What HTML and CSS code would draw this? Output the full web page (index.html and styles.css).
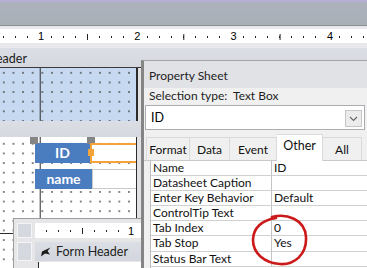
FILE: index.html
```html
<!DOCTYPE html>
<html lang="en">
<head>
  <meta charset="UTF-8">
  <title>Form Design - Property Sheet</title>
  <link rel="stylesheet" href="styles.css">
</head>
<body>
  <div class="app">
    <div class="titlebar"></div>
    <div class="ruler-wrap">
      <div class="ruler">
        <span class="mark"><b>1</b></span>
        <span class="mark"><b>2</b></span>
        <span class="mark"><b>3</b></span>
        <span class="mark"><b>4</b></span>
      </div>
    </div>

    <!-- Form design surface -->
    <div class="designer">
      <div class="section-bar header-bar"><span class="section-title">Form Header</span></div>
      <div class="form-row">
        <div class="grid-area blue-area"></div>
        <div class="gutter"></div>
      </div>
      <div class="section-bar detail-bar"></div>
      <div class="form-row detail-row">
        <div class="grid-area white-area">
          <div class="control-row first">
            <span class="handle h1"></span>
            <span class="handle h2"></span>
            <div class="label">ID</div>
            <div class="textbox selected"><span class="sel-dot"></span></div>
          </div>
          <div class="control-row">
            <div class="label wide">name</div>
            <div class="textbox"></div>
          </div>
        </div>
        <div class="gutter"></div>
      </div>
    </div>

    <!-- Second form window -->
    <div class="subform">
      <div class="sub-row">
        <span class="sub-btn"></span>
        <div class="sub-ruler"><span class="mark"><b>1</b></span></div>
      </div>
      <div class="sub-row">
        <span class="sub-btn tall"></span>
        <div class="sub-section">
          <svg class="sec-icon" width="10" height="10" viewBox="0 0 10 10"><path d="M9.5 0.5 L1 4.5 L0 9.5 L4 6.5 L9 7.5 L6.5 4 Z" fill="#1a1a1a"/></svg>
          <span>Form Header</span>
        </div>
      </div>
      <div class="sub-row">
        <span class="sub-spacer"></span>
        <div class="sub-body"></div>
      </div>
    </div>

    <!-- Property sheet -->
    <div class="property-sheet">
      <div class="ps-title">Property Sheet</div>
      <div class="ps-selection">Selection type:&nbsp; Text Box</div>
      <div class="ps-combo">
        <span>ID</span>
        <span class="combo-btn">
          <svg width="9" height="6" viewBox="0 0 9 6"><polyline points="1,1 4.5,4.5 8,1" fill="none" stroke="#666" stroke-width="1.1"/></svg>
        </span>
      </div>
      <div class="ps-tabs">
        <span class="tab t-format">Format</span>
        <span class="tab t-data">Data</span>
        <span class="tab t-event">Event</span>
        <span class="tab t-other active">Other</span>
        <span class="tab t-all">All</span>
      </div>
      <div class="ps-grid">
        <div class="cell">Name</div><div class="cell val">ID</div>
        <div class="cell">Datasheet Caption</div><div class="cell val"></div>
        <div class="cell">Enter Key Behavior</div><div class="cell val">Default</div>
        <div class="cell">ControlTip Text</div><div class="cell val"></div>
        <div class="cell">Tab Index</div><div class="cell val">0</div>
        <div class="cell">Tab Stop</div><div class="cell val">Yes</div>
        <div class="cell">Status Bar Text</div><div class="cell val"></div>
      </div>
    </div>

    <!-- hand drawn annotation -->
    <svg class="annotation" width="62" height="56" viewBox="0 0 62 56">
      <path d="M22 4 C36 0 55 6 56 24 C57 42 44 52 30 51 C14 50 3 40 3 27 C3 15 12 7 26 5" fill="none" stroke="#cc1a1a" stroke-width="2.6" stroke-linecap="round"/>
    </svg>
  </div>
</body>
</html>
```

FILE: styles.css
```css
/* Base */
body {
  margin: 0;
  font-family: Lato, "Liberation Sans", sans-serif;
  color: #000;
}

.app {
  position: relative;
  width: 367px;
  height: 268px;
  overflow: hidden;
  background: #e8e8e8;
}

/* Top strip and ruler */
.titlebar {
  height: 26px;
  border-top: 2px solid #b6aed4;
  box-sizing: border-box;
  background: linear-gradient(#aeb1bd, #a8b1b6);
  border-bottom: 1px solid #868c92;
}

.ruler-wrap {
  padding: 3px 0 5px;
  background: #e9e9ed;
}

.ruler {
  height: 14px;
  display: flex;
  padding-left: 37px;
  background-color: #fff;
  background-image:
    linear-gradient(to right, #222 1px, transparent 1px),
    linear-gradient(to right, #222 1px, transparent 1px);
  background-size: 12px 2px, 96.3px 6px;
  background-position: 3px 7px, 87px 5px;
  background-repeat: repeat-x;
  font-family: "Liberation Sans", sans-serif;
  font-size: 11px;
  line-height: 15px;
}

.mark {
  width: 96.3px;
  flex: none;
}

.mark b {
  font-weight: normal;
  background: #fff;
  padding: 0 1px;
}

/* Design surface */
.section-bar {
  background: linear-gradient(#dcdee5, #d5d8df);
  overflow: hidden;
  white-space: nowrap;
}

.header-bar {
  height: 19px;
  line-height: 22px;
  font-size: 12.5px;
  color: #222;
  border-bottom: 1px solid #3a3a3a;
}

.section-title {
  display: inline-block;
  margin-left: -45px;
}

.detail-bar {
  height: 16px;
}

.form-row {
  display: flex;
}

.grid-area {
  width: 137px;
  flex: none;
  background-image:
    linear-gradient(to right, transparent 40px, #2b2b2b 40px, #2b2b2b 41px, transparent 41px),
    radial-gradient(circle, #3a3a3a 0.55px, transparent 0.9px);
  background-size: 96.3px 100%, 9.63px 9.63px;
  background-position: 0 0, -1px 0;
  border-right: 1px solid #2b2b2b;
}

.blue-area {
  height: 53px;
  background-color: #c7d9f0;
}

.white-area {
  height: 131px;
  background-color: #fff;
  background-image:
    linear-gradient(to right, transparent 40px, #2b2b2b 40px, #2b2b2b 41px, transparent 41px),
    linear-gradient(to bottom, transparent 96px, #2b2b2b 96px, #2b2b2b 97px, transparent 97px),
    radial-gradient(circle, #3a3a3a 0.55px, transparent 0.9px);
  background-size: 96.3px 100%, 100% 200px, 9.63px 9.63px;
  background-position: 0 0, 0 0, -1px 2px;
  padding-top: 6px;
  box-sizing: border-box;
}

.gutter {
  flex: 1;
  background: #e2e2e4;
}

/* Controls */
.control-row {
  position: relative;
  display: flex;
  height: 20px;
  padding-left: 35px;
  margin-bottom: 6px;
}

.label {
  width: 55px;
  background: #4a7dc0;
  color: #fff;
  font-weight: bold;
  font-size: 14px;
  line-height: 20px;
  text-align: center;
}

.label.wide {
  width: 57px;
}

.textbox {
  flex: 1;
  background: #fff;
  border: 1px solid #c9c9c9;
  border-right: none;
  box-sizing: border-box;
}

.textbox.selected {
  position: relative;
  border: 2px solid #f2a33a;
  border-right: none;
}

.sel-dot {
  position: absolute;
  left: -4px;
  top: 4px;
  width: 6px;
  height: 7px;
  background: #f2a33a;
}

.handle {
  position: absolute;
  top: -6px;
  width: 8px;
  height: 7px;
  background: #858585;
}

.h1 { left: 30px; }
.h2 { left: 87px; }

/* Second form window */
.subform {
  position: absolute;
  left: 13px;
  top: 218px;
  width: 140px;
  height: 60px;
  background: #e6e6e8;
  border: 1px solid #9c9c9c;
  box-sizing: border-box;
  padding-top: 4px;
}

.sub-row {
  display: flex;
  align-items: flex-start;
  margin-bottom: 4px;
}

.sub-btn, .sub-spacer {
  width: 15px;
  height: 15px;
  margin: 0 3px;
  flex: none;
  background: #d5d8de;
  border: 1px solid #f4f4f6;
  box-sizing: border-box;
}

.sub-btn.tall {
  height: 19px;
}

.sub-spacer {
  background: none;
  border: none;
}

.sub-ruler {
  flex: 1;
  height: 15px;
  background-color: #fff;
  background-image:
    linear-gradient(to right, #222 1px, transparent 1px),
    linear-gradient(to right, #222 1px, transparent 1px);
  background-size: 12px 2px, 96.3px 6px;
  background-position: 11px 7px, 47px 5px;
  background-repeat: repeat-x;
  font-family: "Liberation Sans", sans-serif;
  font-size: 11px;
  line-height: 16px;
  padding-left: 92px;
  box-sizing: border-box;
}

.sub-section {
  flex: 1;
  height: 19px;
  display: flex;
  align-items: center;
  gap: 5px;
  padding-left: 6px;
  background: linear-gradient(#dcdee5, #d3d6dd);
  font-size: 12.5px;
  color: #222;
  white-space: nowrap;
}

.sub-body {
  flex: 1;
  height: 20px;
  margin-top: -3px;
  background: #fff;
  border-left: 3px solid #e6e6e8;
  box-shadow: inset 1px 0 0 #2b2b2b;
}

/* Property sheet */
.property-sheet {
  position: absolute;
  left: 141px;
  top: 60px;
  width: 226px;
  height: 208px;
  background: #f0f0f0;
  border-top: 1px solid #a3a3a3;
  border-left: 3px solid #858585;
  box-sizing: border-box;
  display: flex;
  flex-direction: column;
}

.property-sheet > div {
  flex-shrink: 0;
}

.ps-title {
  height: 27px;
  line-height: 30px;
  padding-left: 5px;
  font-size: 12px;
  color: #1e1e1e;
  background: #e1e2e6;
}

.ps-selection {
  height: 17px;
  line-height: 16px;
  padding-left: 5px;
  font-size: 12px;
  color: #1e1e1e;
}

.ps-combo {
  height: 25px;
  margin: 0 2px 0 1px;
  display: flex;
  align-items: center;
  justify-content: space-between;
  padding: 0 2px 0 5px;
  background: #fff;
  border: 1px solid #abadb3;
  box-sizing: border-box;
  font-size: 12.5px;
}

.combo-btn {
  width: 17px;
  height: 17px;
  margin-top: 2px;
  display: flex;
  align-items: center;
  justify-content: center;
  background: #ececec;
  border: 1px solid #c6c6c6;
  box-sizing: border-box;
}

.ps-tabs {
  display: flex;
  align-items: flex-end;
  height: 31px;
  padding-left: 2px;
  border-bottom: 1px solid #c9c9c9;
  box-sizing: border-box;
}

.tab {
  height: 23px;
  line-height: 23px;
  text-align: center;
  font-size: 12px;
  color: #111;
  border: 1px solid #dadada;
  border-bottom: none;
  border-left: none;
  box-sizing: border-box;
}

.t-format { width: 44px; border-left: 1px solid #dadada; }
.t-data { width: 40px; }
.t-event { width: 47px; }
.t-other { width: 46px; }
.t-all { width: 39px; }

.tab.active {
  height: 27px;
  line-height: 21px;
  font-size: 12.5px;
  background: #fff;
  margin-bottom: -1px;
}

.ps-grid {
  display: grid;
  grid-template-columns: 120px 1fr;
  margin-left: 6px;
  background: #fff;
  border-left: 1px solid #bdbdbd;
  flex: 1;
  align-content: start;
}

.cell {
  height: 15.1px;
  line-height: 14px;
  padding-left: 2px;
  font-size: 12px;
  color: #111;
  border-bottom: 1px solid #d0d0d0;
  box-sizing: border-box;
  white-space: nowrap;
  overflow: hidden;
}

.cell.val {
  border-left: 1px solid #c4c4c4;
}

/* Annotation */
.annotation {
  position: absolute;
  left: 250px;
  top: 213px;
}
```
